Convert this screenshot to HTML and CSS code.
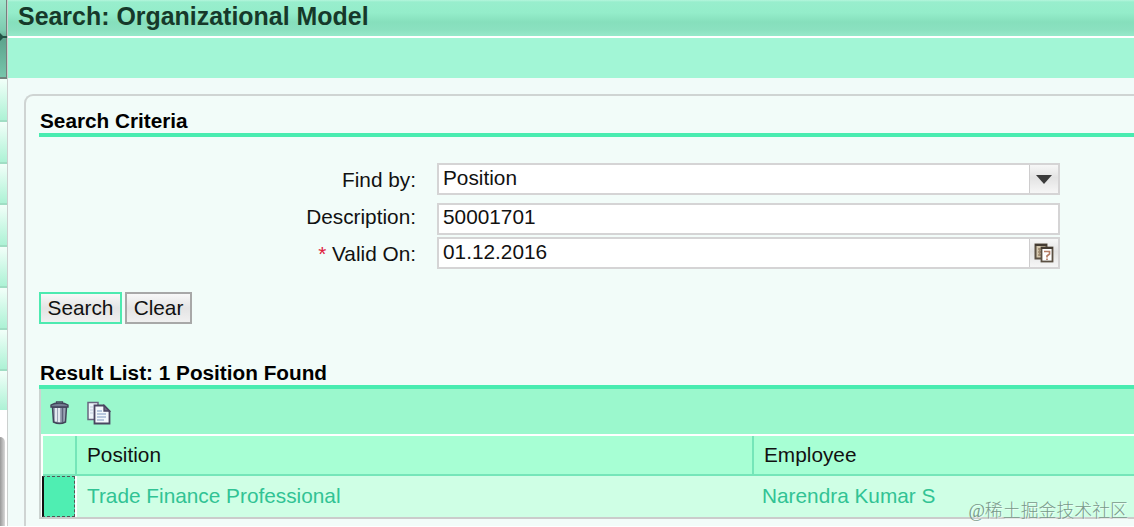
FILE: index.html
```
<!DOCTYPE html>
<html lang="en">
<head>
    <meta charset="UTF-8">
    <meta name="viewport" content="width=device-width, initial-scale=1.0">
    <title>Search: Organizational Model</title>
    <link rel="stylesheet" href="styles.css">
</head>
<body>
    <div class="layout">
        <!-- Collapsed navigation -->
        <div class="sidebar">
            <div class="sidebar-top">
                <svg width="7" height="8" viewBox="0 0 7 8"><path d="M0 0L3 3H7V5H3L0 8Z" fill="#245346"/></svg>
            </div>
            <div class="sidebar-item"></div>
            <div class="sidebar-item"></div>
            <div class="sidebar-item"></div>
            <div class="sidebar-item"></div>
            <div class="sidebar-item"></div>
            <div class="sidebar-item"></div>
            <div class="sidebar-item"></div>
            <div class="sidebar-item"></div>
            <div class="sidebar-shadow"></div>
        </div>

        <div class="main">
            <h1>Search: Organizational Model</h1>
            <div class="menu-bar"></div>

            <div class="panel">
                <h2>Search Criteria</h2>

                <div class="form">
                    <label for="findBy">Find by:</label>
                    <div class="field">
                        <input type="text" id="findBy" value="Position">
                        <span class="field-button">
                            <svg width="16" height="9" viewBox="0 0 16 9"><path d="M0 0H16L8 9Z" fill="#3b3b3b"/></svg>
                        </span>
                    </div>

                    <label for="description">Description:</label>
                    <div class="field field-description">
                        <input type="text" id="description" value="50001701">
                    </div>

                    <label for="validOn"><span class="required">*</span> Valid On:</label>
                    <div class="field">
                        <input type="text" id="validOn" value="01.12.2016">
                        <span class="field-button">
                            <svg width="20" height="20" viewBox="0 0 20 20">
                                <rect x="1.500" y="1.500" width="11" height="14" fill="#d5c8ae" stroke="#5b5043" stroke-width="2"/>
                                <path d="M1 2H13" stroke="#443b32" stroke-width="2"/>
                                <path d="M4 6H7M4 9H7M4 12H7M5.500 5V13" stroke="#a08c72" stroke-width="1.3"/>
                                <rect x="7.500" y="4.500" width="11" height="14" fill="#fff" stroke="#5b5043" stroke-width="1.8"/>
                                <path d="M7 5H19" stroke="#443b32" stroke-width="2"/>
                                <path d="M10 8.500H15.500V11L13 13V14.500M13 15.500V17" fill="none" stroke="#b57e66" stroke-width="1.7"/>
                            </svg>
                        </span>
                    </div>
                </div>

                <div class="buttons">
                    <button class="primary">Search</button>
                    <button>Clear</button>
                </div>

                <h2 class="result-title">Result List: 1 Position Found</h2>

                <div class="result">
                    <div class="toolbar">
                        <svg width="19" height="24" viewBox="0 0 19 24">
                            <path d="M2.5 6H16.5L15.5 21Q9.5 24 3.5 21Z" fill="#9aa4b5" stroke="#414459" stroke-width="1.5"/>
                            <path d="M6 7V20.5M9 7V21" stroke="#e3e9ee" stroke-width="2"/>
                            <path d="M12.5 7V21" stroke="#5d637a" stroke-width="1.5"/>
                            <path d="M1 6V4Q4 2 9.5 2T18 4V6Z" fill="#747d91" stroke="#414459" stroke-width="1.4"/>
                            <path d="M6.500 2V.8H12.500V2" fill="none" stroke="#414459" stroke-width="1.3"/>
                        </svg>
                        <svg width="24" height="24" viewBox="0 0 24 24">
                            <path d="M1 1.500H11V18.500H1Z" fill="#edf4fa" stroke="#68657f" stroke-width="1.5"/>
                            <path d="M3 6H6M3 9H6M3 12H6" stroke="#c3cfdf"/>
                            <path d="M7.500 4.500H17L22.500 10V22.500H7.500Z" fill="#f3f8fc" stroke="#4a4661" stroke-width="1.8"/>
                            <path d="M17 4.500V10H22.500Z" fill="#6f7086" stroke="#4a4661" stroke-width="1.3"/>
                            <path d="M10 10H15M10 13H19M10 16H19M10 19H17" stroke="#a5b8d3" stroke-width="1.3"/>
                        </svg>
                    </div>
                    <div class="row row-head">
                        <div class="cell-select"></div>
                        <div class="cell">Position</div>
                        <div class="cell">Employee</div>
                    </div>
                    <div class="row row-data">
                        <div class="cell-select"></div>
                        <div class="cell">Trade Finance Professional</div>
                        <div class="cell">Narendra Kumar S</div>
                    </div>
                </div>
            </div>
        </div>
    </div>

    <div class="watermark">@稀土掘金技术社区</div>
</body>
</html>
```

FILE: styles.css
```
* {
    box-sizing: border-box;
}

body {
    font-family: "Liberation Sans", Arial, sans-serif;
    font-size: 20.8px;
    line-height: 24px;
    color: #111;
    background-color: #fff;
    margin: 0;
    height: 527px;
    overflow: hidden;
}

.layout {
    display: flex;
    height: 526px;
    overflow: hidden;
}

svg {
    display: block;
    flex: none;
}

/* Sidebar */
.sidebar {
    width: 8px;
    flex: none;
    display: flex;
    flex-direction: column;
    border-right: 1px solid #ccd0cf;
    background-color: #fff;
}

.sidebar-top {
    height: 79px;
    flex: none;
    padding-top: 33px;
    border-right: 1px solid #757f7c;
    border-bottom: 2px solid #71837d;
    background: linear-gradient(#a0e6cc 0, #7ecbb0 30px, #5da58e 40px, #77c5ab 77px);
}

.sidebar-item {
    height: 41.5px;
    flex: none;
    border-bottom: 2px solid #a0dec4;
    background: linear-gradient(#f2fff9, #adf2d5);
}

.sidebar-top + .sidebar-item {
    height: 43px;
}

.sidebar-item:nth-last-child(2) {
    height: 39px;
    border-bottom: none;
}

.sidebar-shadow {
    margin-top: 27px;
    width: 5px;
    flex: 1;
    border-top-right-radius: 5px;
    background: linear-gradient(to right, #999, #d9d9d9);
}

/* Page */
.main {
    flex: 1;
    min-width: 0;
    background-color: #f1fbf9;
}

h1 {
    height: 38px;
    margin: 0;
    padding: 1px 0 0 10px;
    border-bottom: 2px solid #fff;
    font-size: 24.95px;
    line-height: 30px;
    font-weight: bold;
    color: #16392a;
    background: linear-gradient(#b5f5dc 0, #98eecd 2px, #94edca 13px, #86dfbc 22px, #8be1c0 30px, #96e9ca 36px);
}

.menu-bar {
    height: 40px;
    background-color: #a2f6d6;
}

.panel {
    margin: 16px 0 0 16px;
    height: 440px;
    padding: 12px 0 0 13px;
    border: 2px solid #cfd4d3;
    border-right: none;
    border-top-left-radius: 9px;
    background-color: #f2fcf9;
}

h2 {
    height: 29px;
    margin: 0;
    padding-left: 1px;
    border-bottom: 4px solid #49ecb0;
    font-size: 20.75px;
    line-height: 25px;
    font-weight: bold;
    color: #000;
}

/* Form */
.form {
    display: grid;
    grid-template-columns: 377px 623px;
    grid-template-rows: 40px 34px 32px;
    column-gap: 21px;
    margin-top: 26px;
}

.form label {
    text-align: right;
    line-height: 33px;
}

.form label:nth-of-type(2) {
    line-height: 28px;
}

.required {
    color: #e0203c;
}

.field {
    display: flex;
    height: 32px;
    border: 2px solid #d5d4d5;
    background-color: #fff;
}

.field input {
    flex: 1;
    min-width: 0;
    border: none;
    outline: none;
    padding: 0 0 2px 4px;
    font-family: inherit;
    font-size: 20.8px;
    color: #111;
    background: none;
}

.field-description input {
    padding-bottom: 4px;
}

.field-button {
    width: 29px;
    display: flex;
    align-items: center;
    justify-content: center;
    border-left: 1px solid #cecdce;
    background: linear-gradient(#f7f7f7, #e3e3e3 45%, #f6f6f6);
}

/* Buttons */
.buttons {
    display: flex;
    gap: 3px;
    margin-top: 23px;
}

button {
    height: 32px;
    width: 67px;
    padding: 0 0 1px;
    border: 2px solid #a8a8a8;
    font-family: inherit;
    font-size: 20.8px;
    color: #111;
    background: linear-gradient(#f8f8f8, #e4e4e4 50%, #f0f0f0);
}

button.primary {
    width: 83px;
    border-color: #4deab0;
}

.result-title {
    margin-top: 36px;
}

/* Result list */
.result {
    height: 130px;
    border-left: 2px solid #cbd3d0;
    border-bottom: 2px solid #cbcccb;
    background-color: #fff;
}

.toolbar {
    display: flex;
    align-items: center;
    gap: 18px;
    height: 45px;
    padding: 3px 0 0 9px;
    background-color: #9bf8cd;
}

.row {
    display: grid;
    grid-template-columns: 34px 677px 1fr;
    padding-left: 2px;
}

.row-head {
    height: 42px;
    padding-top: 2px;
}

.row-head > div {
    border-bottom: 2px solid #75e6b9;
    border-right: 2px solid #75e6b9;
    background-color: #a7ffd4;
}

.row-head .cell:last-child {
    border-right: none;
}

.row-data {
    height: 41px;
    grid-template-columns: 35px 676px 1fr;
    padding-left: 1px;
}

.row-data .cell-select {
    width: 33px;
    border: 1px dashed #555;
    border-left: 2px solid #111;
    background-color: #4feeb2;
}

.cell {
    padding-left: 10px;
    line-height: 38px;
}

.row-data .cell {
    line-height: 40px;
    color: #31c394;
    background-color: #cfffe5;
}

.row-data .cell:last-child {
    padding-left: 9px;
}

/* Overlay text in the corner */
.watermark {
    position: absolute;
    right: 6px;
    bottom: 4px;
    font-family: "Liberation Serif", "Noto Sans CJK SC", serif;
    font-size: 17.9px;
    font-weight: 300;
    color: #789889;
    text-shadow: 1px 1px 0 rgba(255, 255, 255, 0.6);
}
```
